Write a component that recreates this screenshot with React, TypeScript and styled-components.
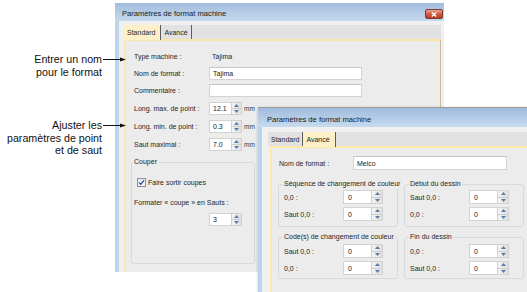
import React from "react";
import styled, { createGlobalStyle } from "styled-components";

const Global = createGlobalStyle`
  *, *::before, *::after { box-sizing: border-box; }
  html, body { margin: 0; padding: 0; background: #fff; }
  body { font-family: "Liberation Sans", Arial, sans-serif; color: #222; }
`;

const Stage = styled.div`
  position: relative;
  width: 527px;
  height: 292px;
  overflow: hidden;
  background: #fff;
  display: flex;
  align-items: flex-start;
`;

/* ---------- callouts ---------- */
const Annotations = styled.div`
  width: 115px;
  flex: none;
  padding-top: 53px;
  display: flex;
  flex-direction: column;
  position: relative;
  z-index: 2;
`;

const Callout = styled.div<{ $gap: number }>`
  display: flex;
  justify-content: flex-end;
  align-items: flex-start;
  margin-top: ${(p) => p.$gap}px;
  margin-right: -11px;
`;

const CalloutText = styled.div`
  font-size: 10.7px;
  line-height: 12.5px;
  color: #111;
  text-align: right;
  white-space: nowrap;
`;

const ArrowSvg = styled.svg`
  flex: none;
  display: block;
`;

const CalloutArrow = () => (
  <ArrowSvg width="24" height="13" viewBox="0 0 24 13">
    <line x1="1" y1="6.5" x2="20" y2="6.5" stroke="#111" strokeWidth="1" />
    <polygon points="18,4.6 24,6.5 18,8.4" fill="#111" />
  </ArrowSvg>
);

/* ---------- windows ---------- */
const Window = styled.div<{ $w: number; $h: number }>`
  flex: none;
  width: ${(p) => p.$w}px;
  height: ${(p) => p.$h}px;
  display: flex;
  flex-direction: column;
  overflow: hidden;
  background: #f0f0f0;
`;

const MainWindow = styled(Window)`
  margin-top: 3px;
`;

const FloatingWindow = styled(Window)`
  position: absolute;
  left: 258px;
  top: 107px;
  border-top: 1px solid #9b9b9b;
  box-shadow: -1px 0 2px rgba(0, 0, 0, 0.12);
`;

const TitleBar = styled.div<{ $h: number; $pl: number }>`
  flex: none;
  height: ${(p) => p.$h}px;
  padding-left: ${(p) => p.$pl}px;
  display: flex;
  align-items: flex-start;
  justify-content: space-between;
  background: linear-gradient(#a0bcdc, #c7daef);
`;

const TitleText = styled.span<{ $top: number }>`
  margin-top: ${(p) => p.$top}px;
  font-size: 7.6px;
  line-height: 10px;
  color: #1a1a1a;
  white-space: nowrap;
`;

const CloseButton = styled.div`
  flex: none;
  width: 18px;
  height: 10px;
  margin-top: 6px;
  margin-right: 1px;
  border: 1px solid #7d3a2e;
  border-radius: 2px;
  background: linear-gradient(#e9a696, #cf5a42 50%, #b93c26);
  display: flex;
  align-items: center;
  justify-content: center;
`;

const CloseGlyph = () => (
  <svg width="6" height="5" viewBox="0 0 6 5">
    <path d="M0.8 0.5 L5.2 4.5 M5.2 0.5 L0.8 4.5" stroke="#fff" strokeWidth="1.3" />
  </svg>
);

const Body = styled.div<{ $pt: number; $pl: number }>`
  flex: 1;
  min-height: 0;
  display: flex;
  flex-direction: column;
  border-left: 4px solid #bed4eb;
  padding: ${(p) => p.$pt}px 3px 0 ${(p) => p.$pl}px;
`;

const TabStrip = styled.div`
  flex: none;
  height: 14px;
  display: flex;
  align-items: flex-end;
  background: #e2e2e2;
`;

const Tab = styled.div<{ $active?: boolean }>`
  height: ${(p) => (p.$active ? 15 : 14)}px;
  margin-bottom: ${(p) => (p.$active ? -1 : 0)}px;
  padding: 0 ${(p) => (p.$active ? 5 : 3)}px 0 3px;
  display: flex;
  align-items: center;
  font-size: 7px;
  color: #1e1e1e;
  white-space: nowrap;
  background: ${(p) => (p.$active ? "#fdf0c8" : "transparent")};
  border-right: 1px solid #5c5c5c;
  position: relative;
`;

const Panel = styled.div<{ $pt: number; $pl: number; $ml: number }>`
  flex: 1;
  min-height: 0;
  margin-left: ${(p) => p.$ml}px;
  background: #ececec;
  border-top: 2px solid #fde6a6;
  border-left: 2px solid #fde9b0;
  border-right: 1px solid #c9bb8f;
  padding: ${(p) => p.$pt}px 0 0 ${(p) => p.$pl}px;
  display: flex;
  flex-direction: column;
`;

const FormRow = styled.div<{ $h: number; $label: number }>`
  height: ${(p) => p.$h}px;
  display: grid;
  grid-template-columns: ${(p) => p.$label}px auto;
  align-items: center;
  justify-content: start;
`;

const Label = styled.span`
  font-size: 7px;
  line-height: 9px;
  color: #262626;
  white-space: nowrap;
`;

const Value = styled(Label)`
  padding-left: 3px;
`;

const TextField = styled.div<{ $w: number; $h: number }>`
  width: ${(p) => p.$w}px;
  height: ${(p) => p.$h}px;
  background: #fff;
  border: 1px solid #d3d3d3;
  border-top-color: #c6c6c6;
  display: flex;
  align-items: center;
  padding-left: 3px;
  font-size: 7px;
  color: #222;
  white-space: nowrap;
`;

const SpinLine = styled.div`
  display: flex;
  align-items: center;
`;

const Unit = styled.span`
  margin-left: 2px;
  font-size: 6.5px;
  color: #333;
`;

const SpinBox = styled.div<{ $w: number; $h: number }>`
  width: ${(p) => p.$w}px;
  height: ${(p) => p.$h}px;
  display: flex;
  background: #fff;
  border: 1px solid #d2d2d2;
`;

const SpinValue = styled.div<{ $pl: number }>`
  flex: 1;
  display: flex;
  align-items: center;
  padding-left: ${(p) => p.$pl}px;
  font-size: 7px;
  color: #222;
`;

const SpinButtons = styled.div<{ $w: number }>`
  flex: none;
  width: ${(p) => p.$w}px;
  display: flex;
  flex-direction: column;
  border-left: 1px solid #d0d0d0;
  background: linear-gradient(90deg, #f4f4f4, #e0e0e0);
`;

const SpinHalf = styled.div`
  flex: 1;
  display: flex;
  align-items: center;
  justify-content: center;
  & + & {
    border-top: 1px solid #cdcdcd;
  }
`;

const SpinArrow = ({ up }: { up?: boolean }) => (
  <svg width="5" height="3" viewBox="0 0 5 3">
    <polygon points={up ? "0,3 2.5,0 5,3" : "0,0 2.5,3 5,0"} fill="#5b7aa5" />
  </svg>
);

const Spinner = ({
  value,
  w,
  h,
  pl,
  bw,
}: {
  value: string;
  w: number;
  h: number;
  pl: number;
  bw: number;
}) => (
  <SpinBox $w={w} $h={h}>
    <SpinValue $pl={pl}>{value}</SpinValue>
    <SpinButtons $w={bw}>
      <SpinHalf>
        <SpinArrow up />
      </SpinHalf>
      <SpinHalf>
        <SpinArrow />
      </SpinHalf>
    </SpinButtons>
  </SpinBox>
);

/* ---------- group boxes ---------- */
const Group = styled.fieldset<{ $w?: number; $h?: number; $pl: number; $pt: number; $pb: number }>`
  margin: 0;
  min-width: 0;
  ${(p) => (p.$w ? `width: ${p.$w}px;` : "")}
  ${(p) => (p.$h ? `height: ${p.$h}px;` : "")}
  padding: ${(p) => p.$pt}px 4px ${(p) => p.$pb}px ${(p) => p.$pl}px;
  border: 1px solid #d5dade;
  border-radius: 3px;
  display: flex;
  flex-direction: column;
`;

const Legend = styled.legend`
  font-size: 7px;
  line-height: 10px;
  padding: 0 1px;
  margin-left: -1px;
  color: #262626;
  white-space: nowrap;
`;

const CouperGroup = styled(Group)`
  margin-top: 4px;
  margin-left: -3px;
`;

const CheckRow = styled.div`
  margin-top: 9px;
  margin-left: 3px;
  height: 12px;
  display: flex;
  align-items: center;
  gap: 2px;
`;

const PlainRow = styled.div<{ $mt: number; $pl?: number }>`
  margin-top: ${(p) => p.$mt}px;
  padding-left: ${(p) => p.$pl ?? 0}px;
  display: flex;
  align-items: center;
  min-height: 12px;
`;

const CheckBox = () => (
  <svg width="9" height="9" viewBox="0 0 9 9">
    <defs>
      <linearGradient id="cbg" x1="0" y1="0" x2="1" y2="1">
        <stop offset="0" stopColor="#dbe6f3" />
        <stop offset="1" stopColor="#f7f9fc" />
      </linearGradient>
    </defs>
    <rect x="0.5" y="0.5" width="8" height="8" fill="url(#cbg)" stroke="#8e8f8f" />
    <path d="M2.2 4.6 L3.8 6.3 L6.9 2.4" fill="none" stroke="#2b4b8b" strokeWidth="1.3" />
  </svg>
);

const GroupGrid = styled.div`
  margin-top: 9px;
  margin-left: -1px;
  display: grid;
  grid-template-columns: 120px 120px;
  column-gap: 6px;
  row-gap: 5px;
`;

const GroupRows = styled.div`
  display: flex;
  flex-direction: column;
  gap: 3px;
`;

type Row = { label: string; value: string };

const SmallGroup = ({ title, rows, pt, pb }: { title: string; rows: Row[]; pt: number; pb: number }) => (
  <Group $pl={5} $pt={pt} $pb={pb}>
    <Legend>{title}</Legend>
    <GroupRows>
      {rows.map((r, i) => (
        <FormRow key={i} $h={14} $label={59}>
          <Label>{r.label}</Label>
          <Spinner value={r.value} w={40} h={14} pl={4} bw={11} />
        </FormRow>
      ))}
    </GroupRows>
  </Group>
);

export default function App() {
  return (
    <>
      <Global />
      <Stage>
        <Annotations>
          <Callout $gap={0}>
            <CalloutText>
              Entrer un nom
              <br />
              pour le format
            </CalloutText>
            <CalloutArrow />
          </Callout>
          <Callout $gap={41}>
            <CalloutText>
              Ajuster les
              <br />
              paramètres de point
              <br />
              et de saut
            </CalloutText>
            <CalloutArrow />
          </Callout>
        </Annotations>

        <MainWindow $w={329} $h={269}>
          <TitleBar $h={18} $pl={7}>
            <TitleText $top={6}>Paramètres de format machine</TitleText>
            <CloseButton>
              <CloseGlyph />
            </CloseButton>
          </TitleBar>
          <Body $pt={4} $pl={5}>
            <TabStrip>
              <Tab $active>Standard</Tab>
              <Tab>Avancé</Tab>
            </TabStrip>
            <Panel $pt={7} $pl={8} $ml={0}>
              <FormRow $h={17} $label={75}>
                <Label>Type machine :</Label>
                <Value>Tajima</Value>
              </FormRow>
              <FormRow $h={17} $label={75}>
                <Label>Nom de format :</Label>
                <TextField $w={153} $h={13}>Tajima</TextField>
              </FormRow>
              <FormRow $h={17} $label={75}>
                <Label>Commentaire :</Label>
                <TextField $w={153} $h={13} />
              </FormRow>
              <FormRow $h={18} $label={75}>
                <Label>Long. max. de point :</Label>
                <SpinLine>
                  <Spinner value="12.1" w={33} h={13} pl={3} bw={10} />
                  <Unit>mm</Unit>
                </SpinLine>
              </FormRow>
              <FormRow $h={18} $label={75}>
                <Label>Long. min. de point :</Label>
                <SpinLine>
                  <Spinner value="0.3" w={33} h={13} pl={3} bw={10} />
                  <Unit>mm</Unit>
                </SpinLine>
              </FormRow>
              <FormRow $h={18} $label={75}>
                <Label>Saut maximal :</Label>
                <SpinLine>
                  <Spinner value="7.0" w={33} h={13} pl={3} bw={10} />
                  <Unit>mm</Unit>
                </SpinLine>
              </FormRow>
              <CouperGroup $w={124} $h={107} $pl={2} $pt={0} $pb={0}>
                <Legend>Couper</Legend>
                <CheckRow>
                  <CheckBox />
                  <Label>Faire sortir coupes</Label>
                </CheckRow>
                <PlainRow $mt={8}>
                  <Label>Formater « coupe » en Sauts :</Label>
                </PlainRow>
                <PlainRow $mt={5} $pl={75}>
                  <Spinner value="3" w={33} h={13} pl={3} bw={10} />
                </PlainRow>
              </CouperGroup>
            </Panel>
          </Body>
        </MainWindow>

        <FloatingWindow $w={300} $h={200}>
          <TitleBar $h={19} $pl={9}>
            <TitleText $top={7}>Paramètres de format machine</TitleText>
          </TitleBar>
          <Body $pt={5} $pl={6}>
            <TabStrip>
              <Tab>Standard</Tab>
              <Tab $active>Avancé</Tab>
            </TabStrip>
            <Panel $pt={8} $pl={7} $ml={2}>
              <FormRow $h={14} $label={74}>
                <Label>Nom de format :</Label>
                <TextField $w={154} $h={14}>Melco</TextField>
              </FormRow>
              <GroupGrid>
                <SmallGroup
                  title="Séquence de changement de couleur"
                  pt={1}
                  pb={5}
                  rows={[
                    { label: "0,0 :", value: "0" },
                    { label: "Saut 0,0 :", value: "0" },
                  ]}
                />
                <SmallGroup
                  title="Début du dessin"
                  pt={1}
                  pb={5}
                  rows={[
                    { label: "Saut 0,0 :", value: "0" },
                    { label: "0,0 :", value: "0" },
                  ]}
                />
                <SmallGroup
                  title="Code(s) de changement de couleur"
                  pt={2}
                  pb={3}
                  rows={[
                    { label: "Saut 0,0 :", value: "0" },
                    { label: "0,0 :", value: "0" },
                  ]}
                />
                <SmallGroup
                  title="Fin du dessin"
                  pt={2}
                  pb={3}
                  rows={[
                    { label: "0,0 :", value: "0" },
                    { label: "Saut 0,0 :", value: "0" },
                  ]}
                />
              </GroupGrid>
            </Panel>
          </Body>
        </FloatingWindow>
      </Stage>
    </>
  );
}
